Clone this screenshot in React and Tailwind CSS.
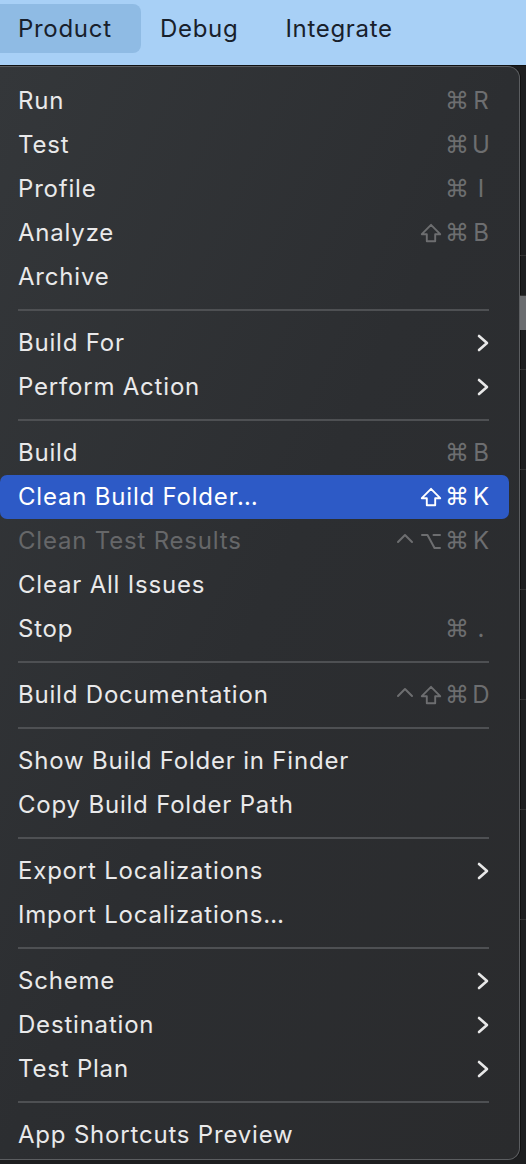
import React from "react";

const Chevron = ({ color = "#e8e8e8" }) => (
  <svg width="14" height="20" viewBox="0 0 14 20" className="block">
    <polyline points="3,3 11,10 3,17" fill="none" stroke={color} strokeWidth="2.6" strokeLinecap="round" strokeLinejoin="round" />
  </svg>
);

const Shift = () => (
  <svg width="22" height="20" viewBox="0 0 22 20" className="block">
    <path d="M11 1.8 L20.2 11.2 H15.2 V18.2 H6.8 V11.2 H1.8 Z" fill="none" stroke="currentColor" strokeWidth="1.9" strokeLinejoin="round" />
  </svg>
);

const Control = () => (
  <svg width="20" height="20" viewBox="0 0 20 20" className="block">
    <polyline points="3,11 10,4 17,11" fill="none" stroke="currentColor" strokeWidth="2" strokeLinecap="round" strokeLinejoin="round" />
  </svg>
);

const Option = () => (
  <svg width="22" height="20" viewBox="0 0 22 20" className="block">
    <path d="M2 4 H7.5 L14.5 17 H20 M13.5 4 H20" fill="none" stroke="currentColor" strokeWidth="2" strokeLinecap="round" strokeLinejoin="round" />
  </svg>
);

const Mod = ({ m }) => {
  if (m === "⇧") return <Shift />;
  if (m === "^") return <Control />;
  if (m === "⌥") return <Option />;
  return (
    <span className="text-[24px] leading-none" style={{ fontFamily: "'DejaVu Sans', sans-serif" }}>
      ⌘
    </span>
  );
};

const groups = [
  [
    { label: "Run", mods: ["⌘"], key: "R" },
    { label: "Test", mods: ["⌘"], key: "U" },
    { label: "Profile", mods: ["⌘"], key: "I" },
    { label: "Analyze", mods: ["⇧", "⌘"], key: "B" },
    { label: "Archive" },
  ],
  [
    { label: "Build For", sub: true },
    { label: "Perform Action", sub: true },
  ],
  [
    { label: "Build", mods: ["⌘"], key: "B" },
    { label: "Clean Build Folder…", mods: ["⇧", "⌘"], key: "K", active: true },
    { label: "Clean Test Results", mods: ["^", "⌥", "⌘"], key: "K", disabled: true },
    { label: "Clear All Issues" },
    { label: "Stop", mods: ["⌘"], key: "." },
  ],
  [{ label: "Build Documentation", mods: ["^", "⇧", "⌘"], key: "D" }],
  [
    { label: "Show Build Folder in Finder" },
    { label: "Copy Build Folder Path" },
  ],
  [
    { label: "Export Localizations", sub: true },
    { label: "Import Localizations…" },
  ],
  [
    { label: "Scheme", sub: true },
    { label: "Destination", sub: true },
    { label: "Test Plan", sub: true },
  ],
  [{ label: "App Shortcuts Preview" }],
];

const Row = ({ item }) => {
  const textColor = item.active
    ? "text-white"
    : item.disabled
    ? "text-[#666769]"
    : "text-[#e9e9ea]";
  const scColor = item.active ? "text-white" : "text-[#6d6e70]";
  return (
    <div
      className={`flex items-center h-[44px] pl-[18px] rounded-[7px] ${
        item.active ? "bg-[#2d5ac6] mr-[10px] pr-[17px]" : "pr-[27px]"
      }`}
    >
      <span className={`flex-1 text-[24px] leading-none tracking-[0.8px] ${textColor}`}>
        {item.label}
      </span>
      {item.mods && (
        <span className={`flex items-center ${scColor}`}>
          {item.mods.map((m, i) => (
            <span key={i} className="w-[26px] flex justify-center">
              <Mod m={m} />
            </span>
          ))}
          <span className="w-[22px] text-center text-[24px] leading-none">{item.key}</span>
        </span>
      )}
      {item.sub && (
        <span className="flex items-center justify-end w-[22px] pr-[2px]">
          <Chevron />
        </span>
      )}
    </div>
  );
};

export default function App() {
  return (
    <div
      className="w-[526px] h-[1164px] overflow-hidden bg-[#1d1e20] flex flex-col"
      style={{ fontFamily: "Inter, 'Noto Sans', sans-serif" }}
    >
      {/* menu bar */}
      <div className="h-[65px] bg-[#a8d0f6] flex items-start pt-[4px] text-[24px] tracking-[0.7px] text-[#18202b] shrink-0">
        <div className="h-[49px] w-[141px] bg-[#8fbbe4] rounded-r-[8px] flex items-center pl-[18px]">
          Product
        </div>
        <div className="h-[49px] flex items-center pl-[19px]">Debug</div>
        <div className="h-[49px] flex items-center pl-[47px]">Integrate</div>
      </div>
      <div className="h-[1px] bg-[#101112] shrink-0" />
      <div className="flex flex-1 min-h-0">
        <div className="w-[520px] h-[1094px] rounded-r-[12px] border border-l-0 border-[#5b5d60] bg-gradient-to-br from-[#34373a] via-[#2c2e31] to-[#2a2b2d] pt-[12px] shadow-[1px_0_0_#111]">
          {groups.map((g, gi) => (
            <div key={gi}>
              {gi > 0 && (
                <div className="h-[22px] flex items-center pl-[18px] pr-[30px]">
                  <div className="h-[2px] w-full bg-[#4e5053]" />
                </div>
              )}
              {g.map((item, ii) => (
                <Row key={ii} item={item} />
              ))}
            </div>
          ))}
        </div>
        <div className="flex-1 flex flex-col">
          <div className="h-[190px] border-b border-[#333]" />
          <div className="h-[40px] border-b border-[#333]" />
          <div className="h-[34px] bg-[#6b6d70]" />
          <div className="h-[40px] border-b border-[#333]" />
          <div className="h-[100px] border-b border-[#333]" />
          <div className="h-[120px] border-b border-[#333]" />
          <div className="h-[110px] border-b border-[#333]" />
          <div className="h-[110px] border-b border-[#333]" />
          <div className="h-[110px] border-b border-[#333]" />
        </div>
      </div>
    </div>
  );
}
